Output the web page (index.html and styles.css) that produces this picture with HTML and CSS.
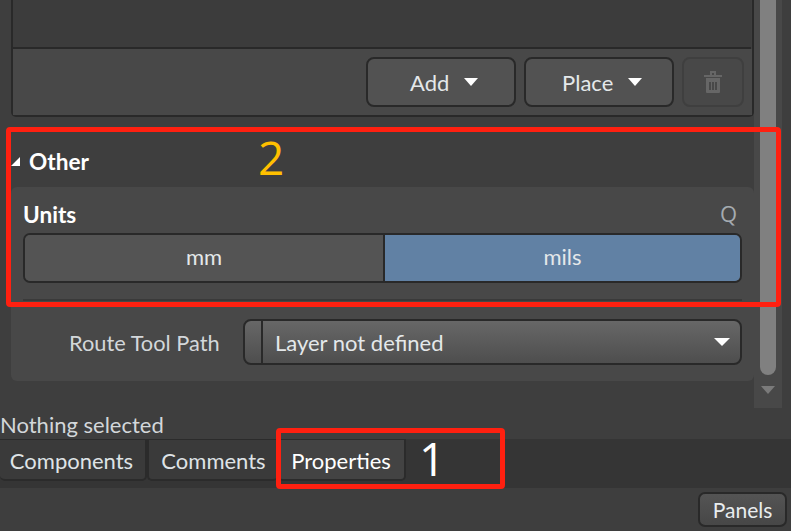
FILE: index.html
```html
<!DOCTYPE html>
<html lang="en">
<head>
  <meta charset="UTF-8" />
  <title>Properties Panel</title>
  <link rel="stylesheet" href="styles.css">
</head>
<body>
  <div class="app">
    <div class="main">
      <div class="panel">
        <div class="list-box">
          <div class="list-area"></div>
          <div class="list-footer">
            <button class="btn btn-wide">Add <span class="caret"></span></button>
            <button class="btn btn-wide">Place <span class="caret"></span></button>
            <button class="btn btn-icon" disabled>
              <svg width="18" height="24" viewBox="0 0 18 24">
                <path fill="#666" d="M0 5h18v2H0zM6 1h6v4h-2V3H8v2H6zM2 8h14v14a1 1 0 0 1-1 1H3a1 1 0 0 1-1-1zM5 12v8h2v-8zM8 12v8h2v-8zM11 12v8h2v-8z" fill-rule="evenodd"/>
              </svg>
            </button>
          </div>
        </div>

        <div class="section-head">
          <span class="tri"></span>
          <span class="section-title">Other</span>
        </div>

        <div class="group">
          <div class="units-head">
            <span class="units-label">Units</span>
            <span class="units-q">Q</span>
          </div>
          <div class="segmented">
            <div class="seg">mm</div>
            <div class="seg seg-on">mils</div>
          </div>
          <div class="group-line"></div>
          <div class="route-row">
            <span class="route-label">Route Tool Path</span>
            <div class="select">
              <span class="select-swatch"></span>
              <span class="select-text">Layer not defined</span>
              <span class="caret caret-select"></span>
            </div>
          </div>
        </div>
      </div>

      <div class="scrollbar">
        <div class="thumb"></div>
        <span class="scroll-down"></span>
      </div>
    </div>

    <div class="status">Nothing selected</div>

    <div class="tabbar">
      <div class="tab tab-first">Components</div>
      <div class="tab tab-second">Comments</div>
      <div class="tab tab-active">Properties</div>
    </div>

    <div class="bottom">
      <button class="panels-btn">Panels</button>
    </div>
  </div>

  <!-- annotations drawn over the screenshot -->
  <div class="mark mark-other"></div>
  <div class="mark mark-tab"></div>
  <span class="num num-two">2</span>
  <span class="num num-one">1</span>
</body>
</html>
```

FILE: styles.css
```css
* {
  box-sizing: border-box;
}
html, body {
  margin: 0;
  height: 100%;
  overflow: hidden;
}
body {
  font-family: Lato, "Open Sans", sans-serif;
  font-size: 22px;
  color: #e4e8ea;
  background: #3e3e3e;
  position: relative;
}
.app {
  display: flex;
  flex-direction: column;
  height: 531px;
}
.main {
  display: flex;
  height: 411px;
  align-items: flex-start;
}
.panel {
  width: 754px;
  padding-left: 11px;
  flex: none;
}
.list-box {
  height: 117px;
  border: 2px solid #292929;
  border-top: 0;
  border-radius: 0 0 5px 5px;
  display: flex;
  flex-direction: column;
}
.list-area {
  height: 49px;
  flex: none;
  background: #3c3c3c;
  border-bottom: 2px solid #292929;
  margin-right: 1px;
}
.list-footer {
  flex: 1;
  background: #484848;
  display: flex;
  justify-content: flex-end;
  gap: 8px;
  padding: 8px 8px 0 0;
}
.btn {
  height: 50px;
  font: inherit;
  color: inherit;
  background: #525252;
  border: 2px solid #292929;
  border-radius: 8px;
  padding: 0 0 0 6px;
}
.btn-wide {
  width: 150px;
}
.btn-icon {
  width: 62px;
  background: #484848;
  border-color: #3f3f3f;
  display: flex;
  align-items: center;
  justify-content: center;
  padding: 0;
}
.caret {
  display: inline-block;
  width: 0;
  height: 0;
  margin-left: 9px;
  vertical-align: 5px;
  border-left: 7px solid transparent;
  border-right: 7px solid transparent;
  border-top: 8px solid #fff;
}
.section-head {
  height: 70px;
  display: flex;
  align-items: center;
  padding-top: 18px;
}
.tri {
  width: 0;
  height: 0;
  border-left: 9px solid transparent;
  border-bottom: 9px solid #fff;
  margin-right: 9px;
}
.section-title {
  font-weight: 700;
  font-size: 22.6px;
  color: #fff;
}
.group {
  height: 194px;
  background: #484848;
  border-radius: 6px;
  padding: 0 12px;
}
.units-head {
  height: 46px;
  display: flex;
  justify-content: space-between;
  align-items: flex-end;
  padding-bottom: 5px;
}
.units-label {
  font-weight: 700;
  font-size: 22.6px;
  color: #fff;
}
.units-q {
  font-family: "Open Sans", sans-serif;
  color: #a5abb0;
  padding-right: 5px;
}
.segmented {
  display: flex;
  height: 50px;
  border: 2px solid #292929;
  border-radius: 7px;
  overflow: hidden;
}
.seg {
  flex: 0 0 360px;
  display: flex;
  align-items: center;
  justify-content: center;
  padding-bottom: 3px;
  background: #545454;
  border-right: 2px solid #292929;
}
.seg-on {
  flex: 1;
  background: #6181a4;
  border-right: 0;
}
.group-line {
  height: 2px;
  margin-top: 16px;
  background: #3a3a3a;
}
.route-row {
  display: flex;
  align-items: center;
  margin-top: 18px;
}
.route-label {
  width: 220px;
  padding-left: 46px;
  white-space: nowrap;
  font-size: 21.8px;
  color: #d3d7da;
}
.select {
  width: 499px;
  height: 46px;
  display: flex;
  align-items: center;
  background: linear-gradient(#676767, #4e4e4e);
  border: 2px solid #292929;
  border-radius: 8px;
  padding-right: 10px;
}
.select-swatch {
  width: 18px;
  height: 100%;
  flex: none;
  border-right: 2px solid #292929;
}
.select-text {
  flex: 1;
  padding-left: 12px;
}
.caret-select {
  margin: 0;
  vertical-align: 0;
  border-left-width: 8px;
  border-right-width: 8px;
}
.scrollbar {
  width: 28px;
  height: 408px;
  background: #484848;
  position: relative;
  flex: none;
}
.thumb {
  width: 16px;
  height: 375px;
  margin-left: 6px;
  background: #808080;
  border-radius: 0 0 8px 8px;
}
.scroll-down {
  display: block;
  width: 0;
  margin: 11px 0 0 7px;
  border-left: 7px solid transparent;
  border-right: 7px solid transparent;
  border-top: 8px solid #7a7a7a;
}
.status {
  height: 28px;
  line-height: 28px;
  color: #d3d7da;
}
.tabbar {
  height: 49px;
  background: #353535;
  display: flex;
  align-items: flex-start;
}
.tab {
  height: 42px;
  display: flex;
  align-items: center;
  justify-content: center;
  padding-top: 1px;
  background: #3a3a3a;
  border: 2px solid #2b2b2b;
  border-top: 1px solid #2b2b2b;
  border-left: 0;
  border-radius: 0 0 5px 5px;
  color: #dfe3e6;
}
.tab-first {
  width: 147px;
  padding-right: 2px;
}
.tab-second {
  width: 131px;
  border-left: 2px solid #2b2b2b;
  border-right: 0;
}
.tab-active {
  width: 128px;
  background: #434343;
  color: #fff;
}
.bottom {
  flex: 1;
  display: flex;
  justify-content: flex-end;
  padding: 4px 4px 0 0;
}
.panels-btn {
  width: 89px;
  height: 35px;
  font: inherit;
  font-size: 21px;
  color: #e8ecee;
  background: linear-gradient(#545454, #474747);
  border: 2px solid #292929;
  border-radius: 7px;
  padding: 0;
}
.mark {
  position: absolute;
  border: 5px solid #ff2010;
  border-radius: 4px;
}
.mark-other {
  left: 6px;
  top: 127px;
  width: 775px;
  height: 180px;
}
.mark-tab {
  left: 276px;
  top: 428px;
  width: 229px;
  height: 61px;
}
.num {
  position: absolute;
  font-family: "Open Sans", sans-serif;
  font-size: 46px;
  line-height: 1;
}
.num-two {
  left: 258px;
  top: 134px;
  color: #ffc000;
}
.num-one {
  left: 419px;
  top: 435px;
  color: #fff;
}
```
